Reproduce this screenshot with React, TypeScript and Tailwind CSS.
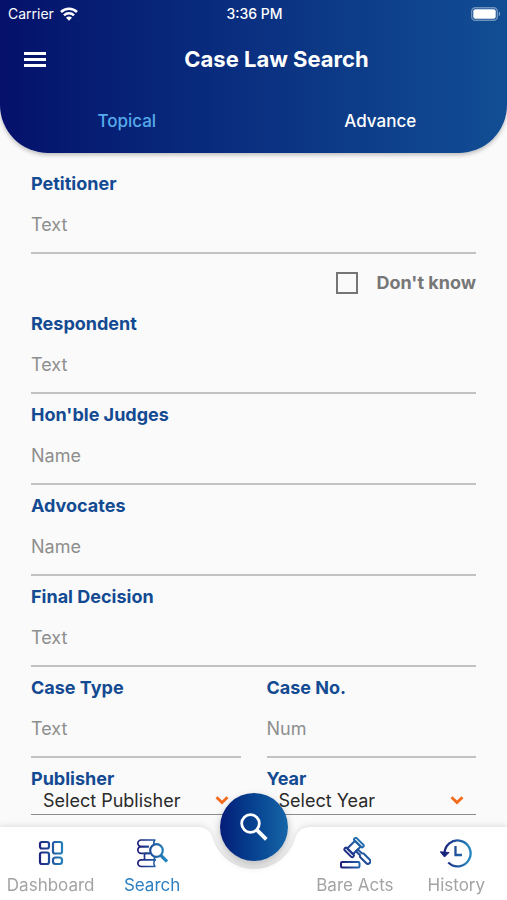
import React, { useState } from "react";
import clsx from "clsx";

interface FieldProps {
  id: string;
  label: string;
  placeholder: string;
}

interface SelectFieldProps {
  id: string;
  label: string;
  options: string[];
}

const Field = ({ id, label, placeholder }: FieldProps) => (
  <div className="min-w-0 pt-[9px]">
    <label htmlFor={id} className="block text-lg leading-6 font-bold text-[#134a92]">
      {label}
    </label>
    <input
      id={id}
      type="text"
      placeholder={placeholder}
      className="block h-[58px] w-full border-b-2 border-[#c2c2c2] bg-transparent text-lg text-gray-800 outline-none placeholder:text-[#8e8e8e]"
    />
  </div>
);

const SelectField = ({ id, label, options }: SelectFieldProps) => (
  <div className="min-w-0 pt-[9px]">
    <label htmlFor={id} className="block text-lg leading-6 font-bold text-[#134a92]">
      {label}
    </label>
    <div className="relative border-b border-[#8c8c8c]">
      <select
        id={id}
        className="block h-[23px] w-full appearance-none bg-transparent pr-8 pb-[3px] pl-3 text-lg leading-5 text-[#2a2a2a] outline-none"
      >
        {options.map((option) => (
          <option key={option}>{option}</option>
        ))}
      </select>
      <svg
        viewBox="0 0 14 10"
        className="pointer-events-none absolute top-1 right-3 h-2.5 w-3.5"
        fill="none"
        stroke="#f26a1b"
        strokeWidth="2.8"
      >
        <path d="M1.5 2.2 7 7.600l5.500-5.400" />
      </svg>
    </div>
  </div>
);

const WifiIcon = () => (
  <svg viewBox="0 0 18 14" className="h-3.5 w-[18px]" fill="none" stroke="white" strokeWidth="2.5">
    <path d="M1 5a11.3 11.3 0 0 1 16 0" />
    <path d="M4 8.400a7 7 0 0 1 10 0" />
    <path d="M9 13.800 6 10.800a4.200 4.200 0 0 1 6 0Z" fill="white" stroke="none" />
  </svg>
);

const BatteryIcon = () => (
  <svg viewBox="0 0 30 14" className="h-3.5 w-[30px]">
    <rect x="0.7" y="0.7" width="25.6" height="12.6" rx="3.6" fill="none" stroke="white" strokeOpacity="0.4" strokeWidth="1.4" />
    <rect x="2.3" y="2.3" width="22.4" height="9.4" rx="2" fill="white" />
    <path d="M27.8 4.8c1.700.6 1.700 3.800 0 4.400Z" fill="white" fillOpacity="0.5" />
  </svg>
);

const DashboardIcon = () => (
  <svg viewBox="0 0 32 32" className="size-8" fill="none" stroke="url(#navStroke)" strokeWidth="2.2">
    <rect x="5" y="5" width="9" height="6.500" rx="2" />
    <rect x="5" y="15.500" width="9" height="11.500" rx="2" />
    <rect x="18" y="5" width="9" height="11.500" rx="2" />
    <rect x="18" y="20.500" width="9" height="6.500" rx="2.500" />
  </svg>
);

const BooksIcon = () => (
  <svg viewBox="0 0 32 32" className="size-8" fill="none" stroke="url(#navStroke)" strokeWidth="1.7">
    <path d="M19.500 3H5.200a3.300 3.300 0 0 0 0 6.700H13M19 3c-1.200 1.200-1.400 2.600-1 4" />
    <path d="M12.500 9.700H5.200a3.300 3.300 0 0 0 0 6.700H14" />
    <path d="M8.500 16.400v6.400M14.500 16.400H8.500M18.500 19.500v3.300" />
    <path d="M20 22.800H5.200a3.300 3.300 0 0 0 0 6.700H19.500M19 22.800c-1.400 1.800-1.400 4.900 0 6.700" />
    <circle cx="20.500" cy="13.500" r="6.300" strokeWidth="2.2" />
    <path d="m25 18.500 6 6" strokeWidth="3.2" />
  </svg>
);

const GavelIcon = () => (
  <svg viewBox="0 0 32 32" className="size-8" fill="none" stroke="url(#navStroke)" strokeWidth="2" strokeLinejoin="round">
    <rect x="2" y="25" width="18.500" height="5.500" rx="1.200" />
    <g transform="rotate(-45 15 10.500)">
      <rect x="9.500" y="6.500" width="11" height="8" />
      <rect x="6.500" y="4.500" width="3.200" height="12" rx="1.300" />
      <rect x="20.300" y="4.500" width="3.200" height="12" rx="1.300" />
      <path d="M13.800 14.500h2.600v5.500l1.200 1.500v8.500a2.500 2.500 0 0 1-5 0v-8.500l1.200-1.500Z" />
    </g>
  </svg>
);

const HistoryIcon = () => (
  <svg viewBox="0 0 32 32" className="size-8" fill="none" stroke="url(#navStroke)" strokeWidth="2.3">
    <path d="M4.600 17A13 13 0 1 1 8.300 25.500" />
    <path d="M0.300 14.800 9 15.500 4.500 20Z" fill="#17247e" stroke="#17247e" strokeWidth="1" />
    <path d="M15.500 9v9h6.500" />
  </svg>
);

const navItems = [
  { name: "Dashboard", icon: DashboardIcon },
  { name: "Search", icon: BooksIcon },
  null, // slot under the round search button
  { name: "Bare Acts", icon: GavelIcon },
  { name: "History", icon: HistoryIcon },
];

const BottomNav = () => (
  <nav className="fixed inset-x-0 bottom-0">
    {/* Background with the notch */}
    <div className="absolute inset-0 flex drop-shadow-[0_-1px_3px_rgba(0,0,0,0.12)]">
      <div className="flex-1 bg-white" />
      <svg viewBox="0 0 130 73" className="h-[73px] w-[130px] fill-white">
        <path d="M0 0H8Q21 0 24 12A43 43 0 0 0 106 12Q109 0 122 0H130V73H0Z" />
      </svg>
      <div className="flex-1 bg-white" />
    </div>

    <svg className="absolute size-0" aria-hidden="true">
      <linearGradient id="navStroke" gradientUnits="userSpaceOnUse" x1="3" y1="0" x2="29" y2="0">
        <stop offset="0" stopColor="#1d1f7c" />
        <stop offset="1" stopColor="#2585bd" />
      </linearGradient>
    </svg>

    <div className="relative grid h-[73px] grid-cols-5">
      {navItems.map((item) =>
        item ? (
          <a
            key={item.name}
            href="#"
            className={clsx(
              "flex flex-col items-center pt-2.5 text-[17px] leading-8 whitespace-nowrap",
              item.name === "Search" ? "text-[#2c7fc0]" : "text-[#a3a3a3]"
            )}
          >
            <item.icon />
            {item.name}
          </a>
        ) : (
          <div key="fab" />
        )
      )}
    </div>

    <button
      aria-label="Search cases"
      className="absolute -top-[34px] left-1/2 flex size-[68px] -translate-x-1/2 items-center justify-center rounded-full bg-linear-to-r from-[#061c78] to-[#1765a8] shadow-[0_4px_8px_rgba(0,0,0,0.25)]"
    >
      <svg viewBox="0 0 28 28" className="size-7" fill="none" stroke="white" strokeWidth="2.8">
        <circle cx="10.500" cy="10.500" r="8.800" />
        <path d="m16.800 16.800 9.500 9.500" strokeWidth="3.8" />
      </svg>
    </button>
  </nav>
);

const App = () => {
  const [tab, setTab] = useState("Topical");

  return (
    <div className="min-h-screen bg-[#fafafa] font-['Inter',sans-serif]">
      <header className="rounded-b-[48px] bg-linear-to-r from-[#05106b] via-[#0b3081] to-[#124e94] text-white shadow-[0_2px_4px_rgba(0,0,0,0.25)]">
        {/* Status bar */}
        <div className="grid h-7 grid-cols-3 items-center pr-1.5 pl-2 text-sm">
          <div className="flex items-center gap-1.5">
            Carrier <WifiIcon />
          </div>
          <span className="text-center font-medium">3:36 PM</span>
          <div className="flex justify-end">
            <BatteryIcon />
          </div>
        </div>

        <div className="flex h-[62px] items-center pl-6">
          <button aria-label="Menu" className="flex w-[22px] flex-col gap-[3px]">
            <span className="h-[3px] bg-white" />
            <span className="h-[3px] bg-white" />
            <span className="h-[3px] bg-white" />
          </button>
          <h1 className="flex-1 text-center text-[22px] font-bold">Case Law Search</h1>
        </div>

        <div className="grid grid-cols-2 text-[17px] leading-[63px] font-medium">
          {["Topical", "Advance"].map((name) => (
            <button key={name} onClick={() => setTab(name)} className={tab === name ? "text-[#56abec]" : "text-white"}>
              {name}
            </button>
          ))}
        </div>
      </header>

      <main className="px-[31px] pt-2.5 pb-20">
        <Field id="petitioner" label="Petitioner" placeholder="Text" />
        <label className="flex h-[49px] items-center justify-end gap-[18px] pt-2 text-lg font-bold text-[#777]">
          <input
            type="checkbox"
            className="size-[22px] appearance-none border-2 border-[#757575] checked:bg-[#134a92]"
          />
          Don't know
        </label>
        <Field id="respondent" label="Respondent" placeholder="Text" />
        <Field id="judges" label="Hon'ble Judges" placeholder="Name" />
        <Field id="advocates" label="Advocates" placeholder="Name" />
        <Field id="decision" label="Final Decision" placeholder="Text" />
        <div className="grid grid-cols-2 gap-x-[26px]">
          <Field id="caseType" label="Case Type" placeholder="Text" />
          <Field id="caseNo" label="Case No." placeholder="Num" />
          <SelectField id="publisher" label="Publisher" options={["Select Publisher"]} />
          <SelectField id="year" label="Year" options={["Select Year"]} />
        </div>
      </main>

      <BottomNav />
    </div>
  );
};

export default App;
